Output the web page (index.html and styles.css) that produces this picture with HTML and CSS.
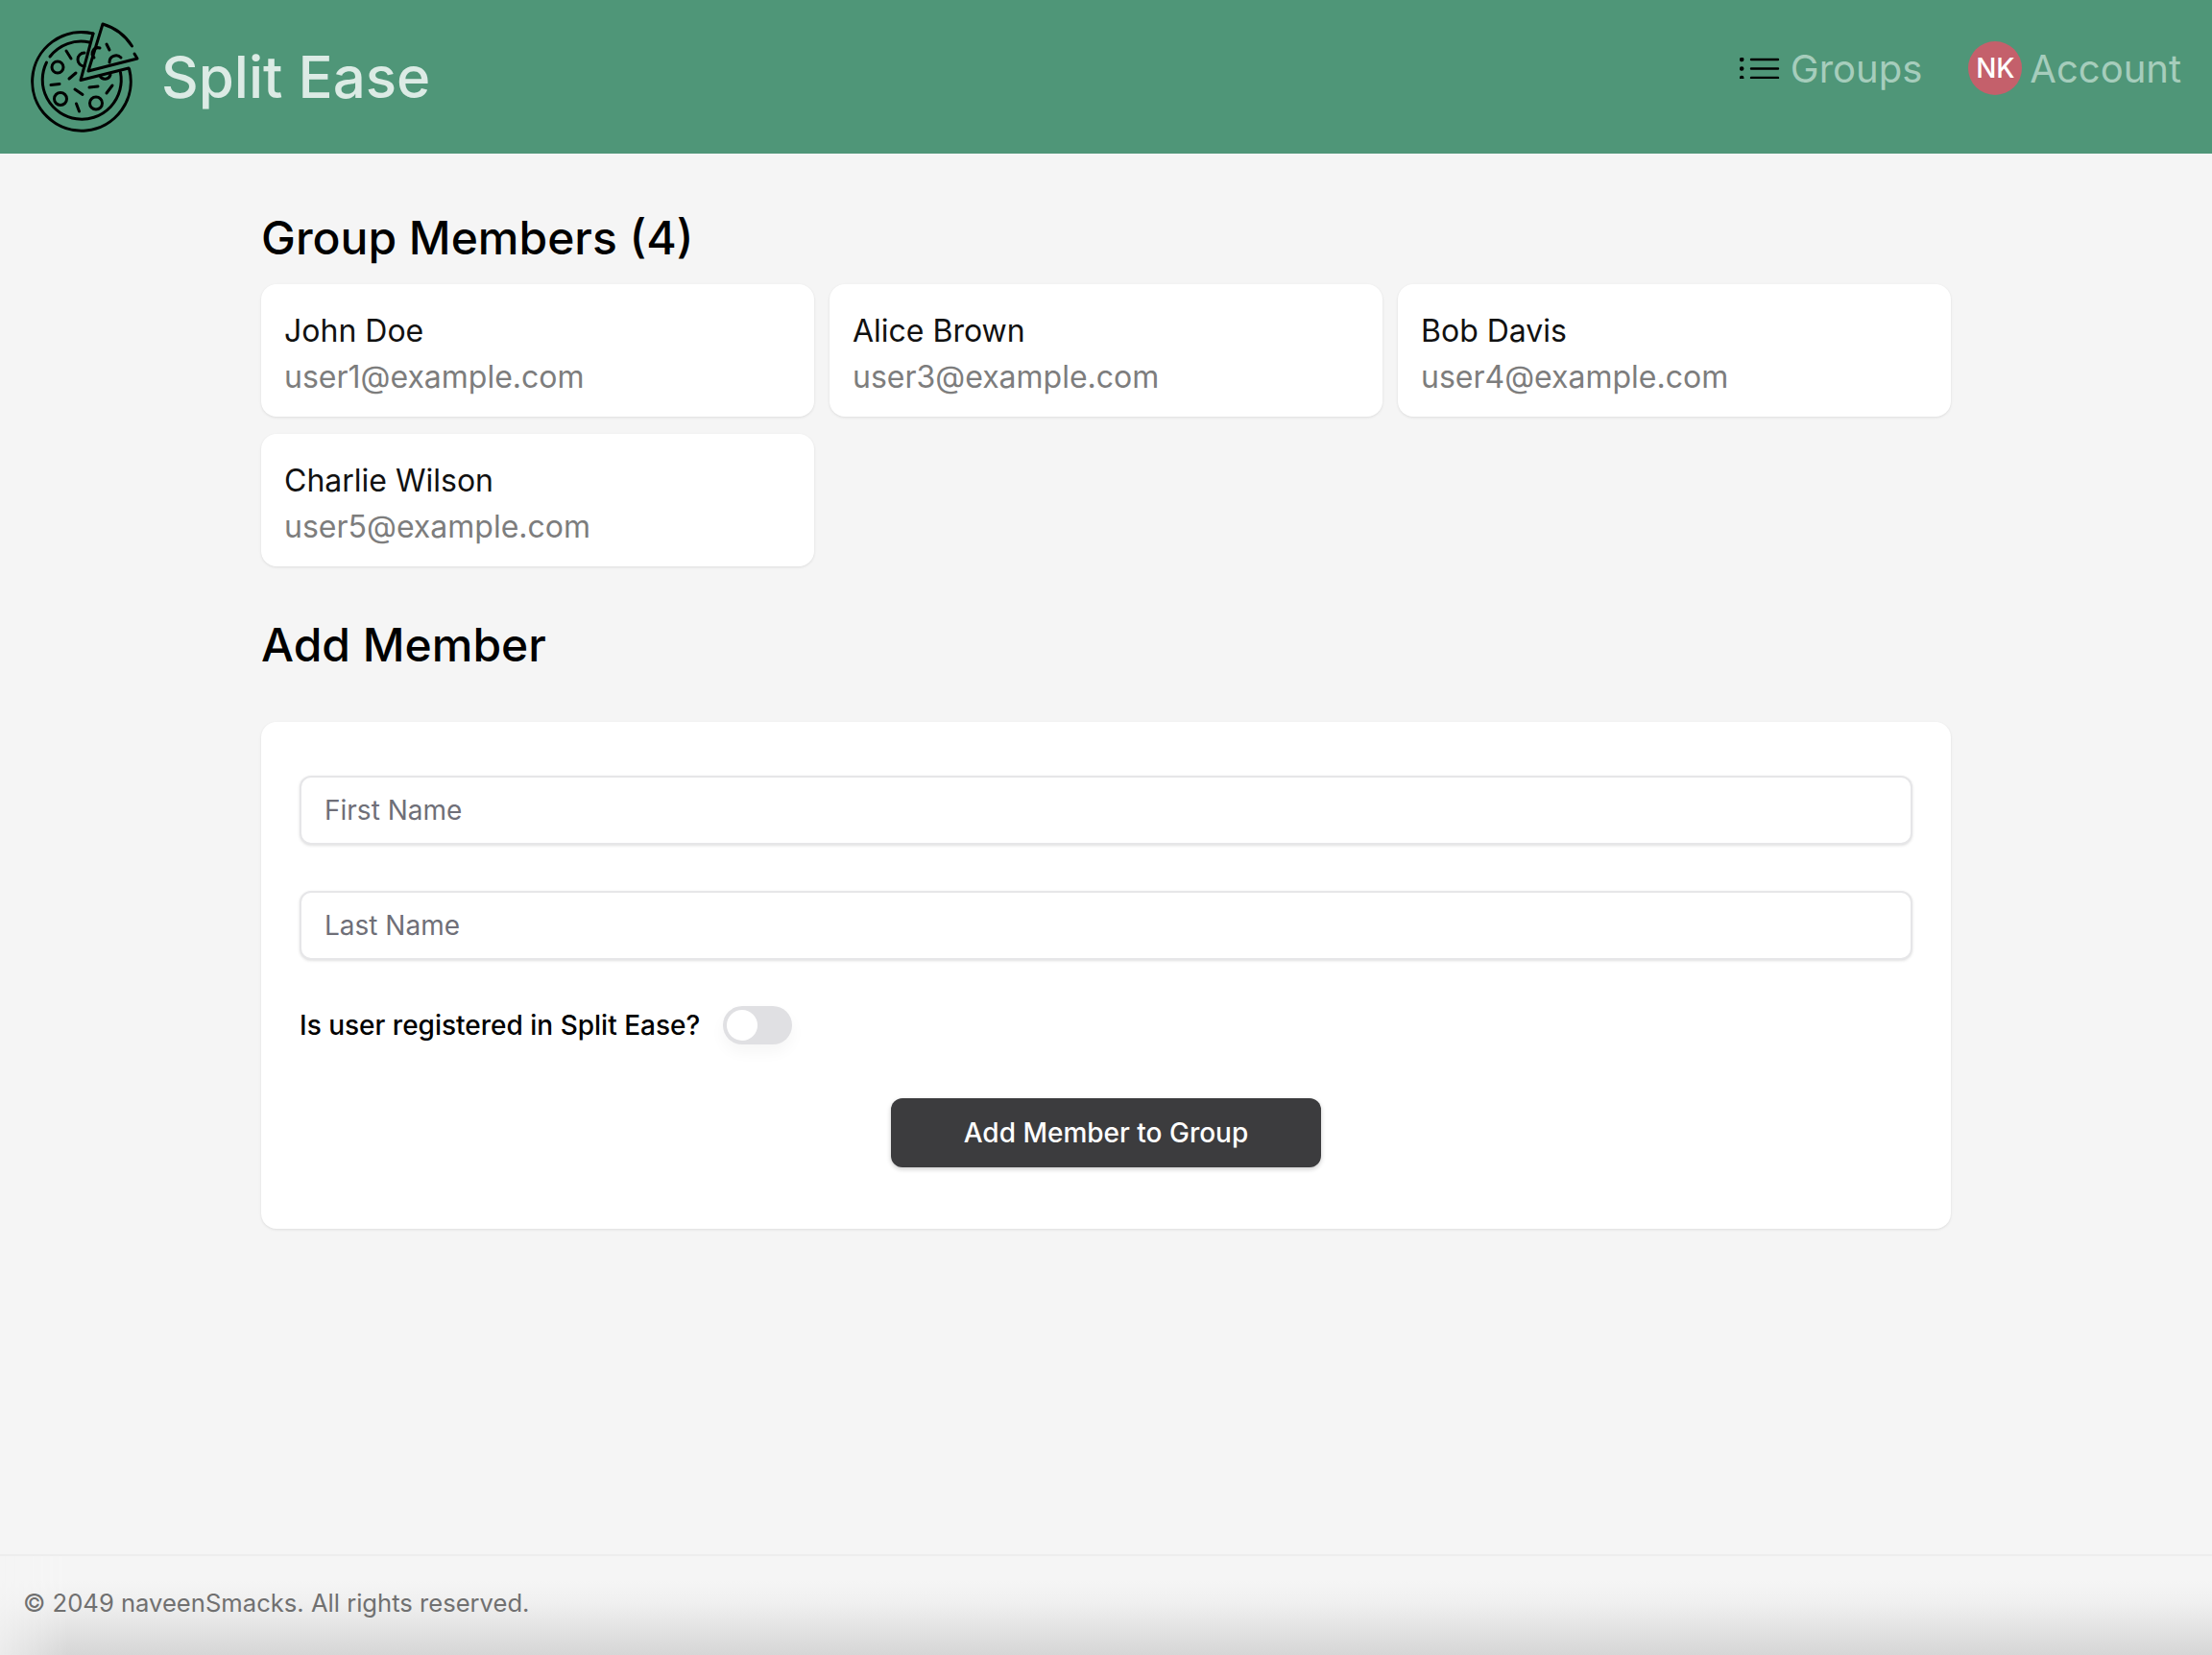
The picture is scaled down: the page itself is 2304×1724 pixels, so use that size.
FILE: index.html
```html
<!DOCTYPE html>
<html lang="en">
<head>
    <meta charset="UTF-8">
    <meta name="viewport" content="width=device-width, initial-scale=1.0">
    <title>Split Ease</title>
    <link rel="stylesheet" href="styles.css">
</head>
<body>

    <header class="topbar">
        <a class="brand" href="#">
            <svg class="brand-logo" viewBox="30 20 116 118" fill="none" stroke="#000" stroke-width="3" stroke-linecap="round" stroke-linejoin="round">
                <!-- pizza -->
                <path d="M97 35A51.3 51.3 0 1 0 134.6 72"/>
                <path d="M93 44A41 41 0 0 0 52 59"/>
                <path d="M48.500 65A41 41 0 1 0 125.500 75.500"/>
                <path d="M97 35L84 83.500L134 71"/>
                <path d="M92 74L107 25A55 55 0 0 1 137.500 48M140 56L143 61L92 74"/>
                <circle cx="60" cy="70" r="6"/>
                <circle cx="63" cy="103" r="6.500"/>
                <circle cx="100" cy="107.500" r="6.500"/>
                <path d="M88 55A6 6 0 0 0 88 69"/>
                <path d="M104 79A6 6 0 0 0 115 78"/>
                <path d="M104 50A6 6 0 0 0 98 60"/>
                <path d="M114 65A7 7 0 0 1 126 60"/>
                <path d="M69 53L74 61M72 82L79 76M53 88.500L62 87.500M93 91L102 90M78 93L86 98.500M117 89L111 97M79.500 108L82.500 116M111 46L114 52"/>
            </svg>
            <span class="brand-name">Split Ease</span>
        </a>
        <nav class="topnav">
            <a class="topnav-link" href="#">
                <svg class="list-icon" viewBox="0 0 42 22" fill="none" stroke="#000" stroke-width="2.400" stroke-linecap="round">
                    <path d="M12 2H40M12 11.500H40M12 21H40"/>
                    <circle cx="2.200" cy="2" r="1.100"/>
                    <circle cx="2.200" cy="11.500" r="1.100"/>
                    <circle cx="2.200" cy="21" r="1.100"/>
                </svg>
                Groups
            </a>
            <a class="topnav-link" href="#">
                <span class="avatar">NK</span>
                Account
            </a>
        </nav>
    </header>

    <main class="page">
        <h2 class="section-title">Group Members (4)</h2>
        <div class="member-grid">
            <div class="member-card">
                <div class="member-name">John Doe</div>
                <div class="member-email">user1@example.com</div>
            </div>
            <div class="member-card">
                <div class="member-name">Alice Brown</div>
                <div class="member-email">user3@example.com</div>
            </div>
            <div class="member-card">
                <div class="member-name">Bob Davis</div>
                <div class="member-email">user4@example.com</div>
            </div>
            <div class="member-card">
                <div class="member-name">Charlie Wilson</div>
                <div class="member-email">user5@example.com</div>
            </div>
        </div>

        <h2 class="section-title add-title">Add Member</h2>
        <form class="add-form">
            <input class="field" type="text" placeholder="First Name">
            <input class="field" type="text" placeholder="Last Name">
            <div class="switch-row">
                <span class="switch-label">Is user registered in Split Ease?</span>
                <span class="switch"><span class="switch-knob"></span></span>
            </div>
            <div class="form-actions">
                <button class="submit-btn" type="button">Add Member to Group</button>
            </div>
        </form>
    </main>

    <footer class="footer">
        <p class="footer-text">© 2049 naveenSmacks. All rights reserved.</p>
    </footer>

</body>
</html>
```

FILE: styles.css
```css
* {
    box-sizing: border-box;
}
body {
    margin: 0;
    min-height: 100vh;
    display: flex;
    flex-direction: column;
    font-family: Inter, "Noto Sans", sans-serif;
    background-color: #f5f5f5;
    color: #000;
}
a {
    text-decoration: none;
}
.topbar {
    height: 160px;
    display: flex;
    justify-content: space-between;
    align-items: center;
    padding: 0 32px 0 30px;
    background-color: #4f9678;
}
.brand {
    display: flex;
    align-items: center;
    gap: 22px;
}
.brand-logo {
    width: 116px;
    height: 118px;
    margin-bottom: 3px;
}
.brand-name {
    font-size: 60px;
    font-weight: 500;
    color: #dcebe5;
}
.topnav {
    display: flex;
    align-items: center;
    gap: 48px;
    margin-bottom: 18px;
}
.topnav-link {
    display: flex;
    align-items: center;
    gap: 11px;
    font-size: 40px;
    color: #a6cdbc;
}
.topnav-link + .topnav-link {
    gap: 8px;
}
.list-icon {
    width: 42px;
    height: 22px;
}
.avatar {
    width: 56px;
    height: 56px;
    display: flex;
    align-items: center;
    justify-content: center;
    border-radius: 50%;
    background-color: #c4606b;
    color: #fff;
    font-size: 28px;
    font-weight: 500;
}
.page {
    flex: 1;
    width: 1760px;
    margin: 0 auto;
    padding-top: 64px;
}
.section-title {
    margin: 0;
    font-size: 48px;
    line-height: 48px;
    font-weight: 500;
}
.member-grid {
    display: grid;
    grid-template-columns: repeat(3, 1fr);
    gap: 18px 16px;
    margin-top: 24px;
}
.member-card {
    height: 138px;
    padding: 25px 24px;
    background-color: #fff;
    border-radius: 16px;
    box-shadow: 0 1px 3px rgba(0, 0, 0, 0.1);
}
.member-name {
    font-size: 32px;
    line-height: 48px;
    color: #111;
}
.member-email {
    font-size: 32px;
    line-height: 48px;
    color: #7d7d7d;
}
.add-title {
    margin-top: 58px;
}
.add-form {
    margin-top: 56px;
    height: 528px;
    padding: 56px 40px;
    background-color: #fff;
    border-radius: 16px;
    box-shadow: 0 1px 3px rgba(0, 0, 0, 0.1);
}
.field {
    display: block;
    width: 100%;
    height: 72px;
    margin-bottom: 48px;
    padding: 0 24px;
    font-family: inherit;
    font-size: 28px;
    background-color: #fff;
    border: 2px solid #e6e6e8;
    border-radius: 12px;
    box-shadow: 0 1px 3px rgba(0, 0, 0, 0.12);
}
.field::placeholder {
    color: #6f6f78;
    opacity: 1;
}
.switch-row {
    display: flex;
    align-items: center;
    gap: 24px;
    height: 40px;
}
.switch-label {
    font-size: 28px;
    font-weight: 500;
}
.switch {
    display: block;
    width: 72px;
    height: 40px;
    padding: 4px;
    background-color: #e0e0e3;
    border-radius: 20px;
    box-shadow: 0 8px 16px rgba(0, 0, 0, 0.04);
}
.switch-knob {
    display: block;
    width: 32px;
    height: 32px;
    background-color: #fff;
    border-radius: 50%;
}
.form-actions {
    display: flex;
    justify-content: center;
    margin-top: 56px;
}
.submit-btn {
    width: 448px;
    height: 72px;
    font-family: inherit;
    font-size: 28px;
    font-weight: 500;
    color: #fff;
    background-color: #3c3c3e;
    border: none;
    border-radius: 12px;
    box-shadow: 0 2px 5px rgba(0, 0, 0, 0.2);
}
.footer {
    height: 105px;
    position: relative;
    padding: 29px 24px;
    border-top: 2px solid #ededed;
}
.footer::after {
    content: "";
    position: absolute;
    inset: 0;
    background: linear-gradient(#f5f5f5 25%, #f0f0f0 47%, #e1e1e1 77%, #d6d6d6);
    -webkit-mask-image: linear-gradient(to right, rgba(0, 0, 0, 0.3), #000 70px);
    mask-image: linear-gradient(to right, rgba(0, 0, 0, 0.3), #000 70px);
}
.footer-text {
    position: relative;
    z-index: 1;
    margin: 0;
    font-size: 25.600px;
    line-height: 40px;
    color: #707070;
}
```
